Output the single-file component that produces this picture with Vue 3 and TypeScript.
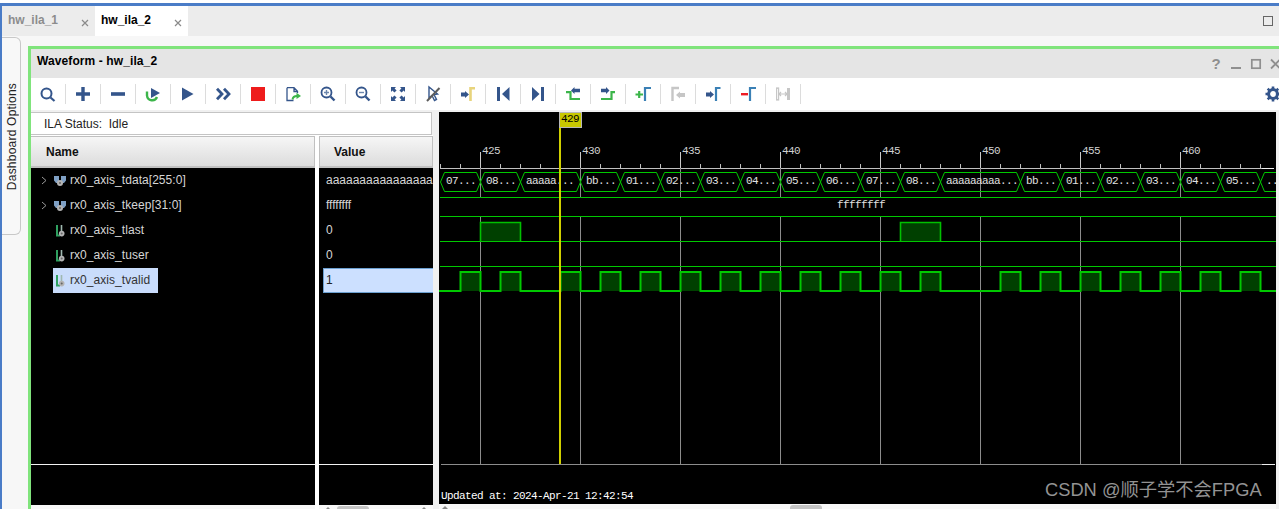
<script setup lang="ts">
interface Signal {
  name: string
  value: string
  bus?: boolean
  selected?: boolean
}

const signals: Signal[] = [
  { name: 'rx0_axis_tdata[255:0]', value: 'aaaaaaaaaaaaaaaaa', bus: true },
  { name: 'rx0_axis_tkeep[31:0]', value: 'ffffffff', bus: true },
  { name: 'rx0_axis_tlast', value: '0' },
  { name: 'rx0_axis_tuser', value: '0' },
  { name: 'rx0_axis_tvalid', value: '1', selected: true },
]

// x position of a clock tick
const tx = (t: number) => 480 + (t - 425) * 20

const majors = [425, 430, 435, 440, 445, 450, 455, 460]
const minors = Array.from({ length: 42 }, (_, i) => 440 + i * 20)

// tdata segments, in pixels on the wave canvas
const busSegs = [
  { x0: 440, x1: 480, label: '07...' },
  { x0: 480, x1: 520, label: '08...' },
  { x0: 520, x1: 580, label: 'aaaaa...' },
  { x0: 580, x1: 620, label: 'bb...' },
  { x0: 620, x1: 660, label: '01...' },
  { x0: 660, x1: 700, label: '02...' },
  { x0: 700, x1: 740, label: '03...' },
  { x0: 740, x1: 780, label: '04...' },
  { x0: 780, x1: 820, label: '05...' },
  { x0: 820, x1: 860, label: '06...' },
  { x0: 860, x1: 900, label: '07...' },
  { x0: 900, x1: 940, label: '08...' },
  { x0: 940, x1: 1020, label: 'aaaaaaaaa...' },
  { x0: 1020, x1: 1060, label: 'bb...' },
  { x0: 1060, x1: 1100, label: '01...' },
  { x0: 1100, x1: 1140, label: '02...' },
  { x0: 1140, x1: 1180, label: '03...' },
  { x0: 1180, x1: 1220, label: '04...' },
  { x0: 1220, x1: 1260, label: '05...' },
  { x0: 1260, x1: 1300, label: '..' },
]

const hexPath = (x0: number, x1: number) =>
  `M${x0 + 0.5} 182 L${x0 + 4.5} 172.5 H${x1 - 3.5} L${x1 + 0.5} 182 L${x1 - 3.5} 191.5 H${x0 + 4.5} Z`

const lastPulses = [480, 900]
const validPulses = [460, 500, 560, 600, 640, 680, 720, 760, 800, 840, 880, 920, 1000, 1040, 1080, 1120, 1160, 1200, 1240]

const validPath = validPulses.reduce((d, x) => `${d} H${x + 0.5} V272 H${x + 20.5} V291`, 'M439 291') + ' H1276'
</script>

<template>
  <div class="app">
    <div class="tabbar">
      <div class="tab">
        <span>hw_ila_1</span>
        <svg class="tab-x" width="8" height="8" viewBox="0 0 8 8"><path d="M1 1 7 7M7 1 1 7" /></svg>
      </div>
      <div class="tab active">
        <span>hw_ila_2</span>
        <svg class="tab-x" width="8" height="8" viewBox="0 0 8 8"><path d="M1 1 7 7M7 1 1 7" /></svg>
      </div>
      <div class="restore" />
    </div>

    <div class="main">
      <div class="side-wrap">
        <div class="side-tab"><span>Dashboard Options</span></div>
      </div>

      <div class="panel">
        <div class="title">
          <span class="title-text">Waveform - hw_ila_2</span>
          <div class="win-btns">
            <span class="win-q">?</span>
            <svg width="20" height="12" viewBox="0 0 20 12"><rect x="5" y="9" width="10" height="2" fill="#8f8f8f" /></svg>
            <svg width="20" height="12" viewBox="0 0 20 12"><rect x="5.8" y="1.8" width="8.4" height="8.4" fill="none" stroke="#8f8f8f" stroke-width="1.7" /></svg>
            <svg width="20" height="12" viewBox="0 0 20 12"><path d="M5 1.5 14 10.5M14 1.5 5 10.5" stroke="#8f8f8f" stroke-width="1.8" /></svg>
          </div>
        </div>

        <div class="toolbar">
          <div class="tool">
            <svg viewBox="0 0 18 18"><circle cx="7.5" cy="8.5" r="5" fill="none" stroke="#34558b" stroke-width="2" /><path d="M11.5 12.5 15.5 16" stroke="#34558b" stroke-width="2.2" /></svg>
          </div>
          <div class="tool">
            <svg viewBox="0 0 18 18"><path d="M2 9H16M9 2V16" stroke="#34558b" stroke-width="3.4" /></svg>
          </div>
          <div class="tool">
            <svg viewBox="0 0 18 18"><rect x="2" y="7.2" width="14" height="3.6" fill="#34558b" /></svg>
          </div>
          <div class="tool">
            <svg viewBox="0 0 18 18"><path d="M3 6.5V10.5A5.2 5.2 0 0 0 13 12" fill="none" stroke="#3cb54a" stroke-width="2.4" /><polygon points="7,3 16,8 7,13" fill="#34558b" /></svg>
          </div>
          <div class="tool">
            <svg viewBox="0 0 18 18"><polygon points="3,2.5 14.5,9 3,15.5" fill="#34558b" /></svg>
          </div>
          <div class="tool">
            <svg viewBox="0 0 18 18"><path d="M3 3.8 8 9 3 14.2M10 3.8 15 9 10 14.2" fill="none" stroke="#34558b" stroke-width="2.8" /></svg>
          </div>
          <div class="tool">
            <svg viewBox="0 0 18 18"><rect x="2" y="2" width="14" height="14" fill="#ee1c1c" /></svg>
          </div>
          <div class="tool">
            <svg viewBox="0 0 18 18"><path d="M3 2.7H10L13.5 6.2V8M3 2.7V15.5H9.5M10 2.7V6.5H13.5" fill="none" stroke="#34558b" stroke-width="1.3" /><path d="M8.5 14.5Q9 11 13 11" fill="none" stroke="#3cb54a" stroke-width="2" /><polygon points="12.5,7.8 17,11 12.5,14" fill="#3cb54a" /></svg>
          </div>
          <div class="tool">
            <svg viewBox="0 0 18 18"><circle cx="7.5" cy="7.5" r="5" fill="none" stroke="#34558b" stroke-width="1.8" /><path d="M5 7.5H10M7.5 5V10" stroke="#6d87ad" stroke-width="1.4" /><path d="M11.5 11.5 15.5 15.5" stroke="#34558b" stroke-width="2.4" /></svg>
          </div>
          <div class="tool">
            <svg viewBox="0 0 18 18"><circle cx="7.5" cy="7.5" r="5" fill="none" stroke="#34558b" stroke-width="1.8" /><path d="M5 7.5H10" stroke="#6d87ad" stroke-width="1.4" /><path d="M11.5 11.5 15.5 15.5" stroke="#34558b" stroke-width="2.4" /></svg>
          </div>
          <div class="tool">
            <svg viewBox="0 0 18 18"><g fill="#34558b"><polygon points="2,2 7,2 5.6,3.4 7.6,5.4 5.4,7.6 3.4,5.6 2,7" /><polygon points="16,2 11,2 12.4,3.4 10.4,5.4 12.6,7.6 14.6,5.6 16,7" /><polygon points="2,16 7,16 5.6,14.6 7.6,12.6 5.4,10.4 3.4,12.4 2,11" /><polygon points="16,16 11,16 12.4,14.6 10.4,12.6 12.6,10.4 14.6,12.4 16,11" /></g></svg>
          </div>
          <div class="tool">
            <svg viewBox="0 0 18 18"><polygon points="5,2 5,13 8,10.5 10.5,15.5 12.5,14.5 10,9.5 13.5,9" fill="none" stroke="#34558b" stroke-width="1.4" /><path d="M15.5 3 3 16" stroke="#5c5c5c" stroke-width="2" /></svg>
          </div>
          <div class="tool">
            <svg viewBox="0 0 18 18"><polygon points="2,7.5 6,7.5 6,6 10,9.5 6,13 6,11.5 2,11.5" fill="#34558b" /><path d="M11.5 16V3.2H16" fill="none" stroke="#e8d47c" stroke-width="2.6" /></svg>
          </div>
          <div class="tool">
            <svg viewBox="0 0 18 18"><rect x="3" y="2" width="3" height="14" fill="#34558b" /><polygon points="15.5,2 15.5,16 8,9" fill="#34558b" /></svg>
          </div>
          <div class="tool">
            <svg viewBox="0 0 18 18"><polygon points="3,2 3,16 10.5,9" fill="#34558b" /><rect x="12" y="2" width="3" height="14" fill="#34558b" /></svg>
          </div>
          <div class="tool">
            <svg viewBox="0 0 18 18"><path d="M2 7.2H6.5V14H16" fill="none" stroke="#3cb54a" stroke-width="2.2" /><polygon points="7,5.5 10.5,2 10.5,3.8 16,3.8 16,7.2 10.5,7.2 10.5,9" fill="#34558b" /></svg>
          </div>
          <div class="tool">
            <svg viewBox="0 0 18 18"><path d="M2 14H12.5V7.2H16" fill="none" stroke="#3cb54a" stroke-width="2.2" /><polygon points="2,3.8 7,3.8 7,2 10.5,5.5 7,9 7,7.2 2,7.2" fill="#34558b" /></svg>
          </div>
          <div class="tool">
            <svg viewBox="0 0 18 18"><path d="M1.5 9.5H9M5.2 6V13" stroke="#3cb54a" stroke-width="2.2" /><path d="M11 16V3H17" fill="none" stroke="#3a80b5" stroke-width="2.2" /></svg>
          </div>
          <div class="tool">
            <svg viewBox="0 0 18 18"><path d="M3.5 16V3H10" fill="none" stroke="#c6c6c6" stroke-width="2.4" /><polygon points="7,10 11,6.5 11,8 16,8 16,12 11,12 11,13.5" fill="#c6c6c6" /></svg>
          </div>
          <div class="tool">
            <svg viewBox="0 0 18 18"><polygon points="2,7.5 6,7.5 6,6 10,9.5 6,13 6,11.5 2,11.5" fill="#34558b" /><path d="M12 16V3H16.5" fill="none" stroke="#3a80b5" stroke-width="2.2" /></svg>
          </div>
          <div class="tool">
            <svg viewBox="0 0 18 18"><rect x="2" y="8" width="7" height="2.4" fill="#ee1c24" /><path d="M11 16V3H17" fill="none" stroke="#3a80b5" stroke-width="2.2" /></svg>
          </div>
          <div class="tool">
            <svg viewBox="0 0 18 18"><rect x="2.6" y="3" width="2" height="12" fill="none" stroke="#c6c6c6" stroke-width="1.2" /><rect x="13" y="3" width="3" height="12" fill="#c6c6c6" /><path d="M5 9H13M7 7 5 9 7 11M11 7 13 9 11 11" fill="none" stroke="#c6c6c6" stroke-width="1.2" /></svg>
          </div>
          <svg class="gear" width="16" height="16" viewBox="0 0 16 16">
            <circle cx="8" cy="8" r="4.4" fill="none" stroke="#34558b" stroke-width="3" />
            <path d="M8 0.5V3.5M8 12.5V15.5M0.5 8H3.5M12.5 8H15.5M2.7 2.7 4.8 4.8M11.2 11.2 13.3 13.3M13.3 2.7 11.2 4.8M4.8 11.2 2.7 13.3" stroke="#34558b" stroke-width="2.6" />
          </svg>
        </div>

        <div class="body">
          <div class="left">
            <div class="status">ILA Status:&nbsp; Idle</div>
            <div class="cols">
              <div class="col col-name">
                <div class="col-head">Name</div>
                <div class="col-list">
                  <div v-for="s in signals" :key="s.name" class="row">
                    <svg v-if="s.bus" class="chevron" width="6" height="9" viewBox="0 0 6 9"><path d="M1 1 5 4.5 1 8" fill="none" stroke="#9a9a9a" /></svg>
                    <span v-else class="chevron" />
                    <div class="sig" :class="{ selected: s.selected }">
                      <svg v-if="s.bus" class="sig-icon" width="12" height="12" viewBox="0 0 12 12">
                        <path d="M0 1H5V7L3.5 8H2L0 5.5ZM7 1H12V5.5L10 8H8.5L7 7Z" fill="#7fa0c4" />
                        <circle cx="6" cy="8" r="3" fill="#b4b4b4" />
                        <circle cx="6" cy="8" r="1" fill="#666" />
                      </svg>
                      <svg v-else class="sig-icon" width="12" height="12" viewBox="0 0 12 12">
                        <path d="M3 0V10.6H6" fill="none" stroke="#2fa060" stroke-width="2" />
                        <path d="M7.5 0V6" stroke="#9fb8b0" stroke-width="1.6" />
                        <circle cx="7.7" cy="8.6" r="2.8" fill="#b4b4b4" />
                        <circle cx="7.7" cy="8.6" r="1" fill="#666" />
                      </svg>
                      <span>{{ s.name }}</span>
                    </div>
                  </div>
                </div>
                <div class="col-foot" />
                <div class="hscroll" />
              </div>

              <div class="col col-value">
                <div class="col-head">Value</div>
                <div class="col-list">
                  <div v-for="s in signals" :key="s.name" class="val" :class="{ selected: s.selected }"><span>{{ s.value }}</span></div>
                </div>
                <div class="col-foot" />
                <div class="hscroll">
                  <i class="arrow arrow-l" />
                  <i class="thumb thumb-val" />
                  <i class="arrow arrow-r" />
                </div>
              </div>
            </div>
          </div>

          <div class="wave-pane">
            <svg class="wave" width="837" height="392" viewBox="439 112 837 392">
              <!-- ruler -->
              <path d="M440 168.5H1262" stroke="#c0c0c0" />
              <path d="M1262 168.5H1274" stroke="#f0f0f0" />
              <path v-for="x in minors" :key="x" :d="`M${x + 0.5} 164V168`" stroke="#c0c0c0" />
              <g v-for="t in majors" :key="t">
                <path :d="`M${tx(t) + 0.5} 152V464`" stroke="#8c8c8c" />
                <path :d="`M${tx(t) + 0.5} 152V168`" stroke="#c8c8c8" />
                <text :x="tx(t) + 2" y="154" class="mono ruler-text">{{ t }}</text>
              </g>
              <path d="M441 464.5H1262" stroke="#8c8c8c" />
              <path d="M1262 464.5H1275" stroke="#eeeeee" />

              <!-- tdata -->
              <g v-for="(b, i) in busSegs" :key="i">
                <path :d="hexPath(b.x0, b.x1)" fill="none" stroke="#00c800" />
                <text :x="b.x0 + 6" y="184" class="mono bus-text">{{ b.label }}</text>
              </g>

              <!-- tkeep, the bus is filled so grid lines stop behind it -->
              <rect x="440" y="197" width="836" height="20" fill="#000" />
              <path d="M440 197.5H1276M440 216.5H1276" stroke="#00c800" />
              <text x="837" y="208" class="mono bus-text">ffffffff</text>

              <!-- tlast -->
              <path d="M440 241.5H1276" stroke="#00c800" />
              <g v-for="x in lastPulses" :key="x">
                <rect :x="x + 1" y="223" width="39" height="18" fill="#004000" />
                <path :d="`M${x + 0.5} 241V222.5H${x + 40.5}V241`" fill="none" stroke="#00c000" stroke-width="1.6" />
              </g>

              <!-- tuser -->
              <path d="M440 266.5H1276" stroke="#00c800" />

              <!-- tvalid -->
              <g v-for="x in validPulses" :key="x">
                <rect :x="x + 1" y="272" width="19" height="19" fill="#004000" />
              </g>
              <path :d="validPath" fill="none" stroke="#00c800" stroke-width="2" />

              <!-- cursor -->
              <rect x="559" y="128" width="2" height="336" fill="#d0d000" />
              <rect x="559.5" y="112.5" width="22" height="15" fill="#c8c800" stroke="#b8b8b8" />
              <text x="561" y="122" class="mono cursor-text">429</text>

              <text x="441" y="499" class="mono updated">Updated at: 2024-Apr-21 12:42:54</text>
            </svg>
            <div class="hscroll">
              <i class="arrow arrow-w" />
              <i class="thumb thumb-wave" />
            </div>
            <div class="watermark">CSDN @顺子学不会FPGA</div>
          </div>
        </div>
      </div>
    </div>
  </div>
</template>

<style>
html,
body {
  margin: 0;
  background: #fff;
  overflow: hidden;
}
</style>

<style scoped>
.app {
  width: 1279px;
  height: 509px;
  box-sizing: border-box;
  padding-top: 3px;
  display: flex;
  flex-direction: column;
  overflow: hidden;
  font-family: "Liberation Sans", Arial, sans-serif;
  font-size: 12px;
  color: #000;
}

.tabbar {
  height: 30px;
  flex: none;
  display: flex;
  padding-left: 2px;
  border-top: 3px solid #4a7cc7;
  background: #ececec;
  box-shadow: inset 2px 0 0 #4a7cc7;
}

.tab {
  width: 93px;
  box-sizing: border-box;
  display: flex;
  align-items: center;
  padding: 0 0 3px 6px;
  font-weight: 700;
  color: #8c8c8c;
  position: relative;
}

.tab.active {
  background: #fff;
  color: #000;
}

.tab-x {
  position: absolute;
  right: 6px;
  top: 13px;
}

.tab-x path {
  stroke: #8a8a8a;
  stroke-width: 1.2;
}

.restore {
  width: 8px;
  height: 8px;
  margin: 10px 6px 0 auto;
  border: 1px solid #666;
}

.main {
  flex: 1;
  min-height: 0;
  display: flex;
  background: #f7f7f7;
  border-left: 2px solid #4a7cc7;
}

.side-wrap {
  width: 26px;
  flex: none;
  padding-top: 1px;
}

.side-tab {
  width: 19px;
  height: 198px;
  box-sizing: border-box;
  display: flex;
  align-items: center;
  justify-content: center;
  padding-left: 1px;
  padding-top: 2px;
  border: 1px solid #c8c8c8;
  border-left: 0;
  border-radius: 0 6px 6px 0;
  background: #f8f8f8;
}

.side-tab span {
  writing-mode: vertical-rl;
  transform: rotate(180deg);
  white-space: nowrap;
  letter-spacing: 0.22px;
  color: #222;
}

.panel {
  flex: 1;
  min-width: 0;
  margin-top: 10px;
  display: flex;
  flex-direction: column;
  border-top: 3px solid #80e47c;
  border-left: 3px solid #80e47c;
}

.title {
  height: 29px;
  flex: none;
  display: flex;
  align-items: center;
  justify-content: space-between;
  padding-left: 6px;
  background: #e5e5e5;
}

.title-text {
  font-weight: 700;
  letter-spacing: 0.1px;
  padding-bottom: 5px;
}

.win-btns {
  display: flex;
  align-items: center;
  margin: 0 -7px 0 0;
  padding-top: 1px;
}

.win-q {
  width: 20px;
  text-align: center;
  font-size: 15px;
  font-weight: 700;
  color: #8f8f8f;
  line-height: 12px;
}

.toolbar {
  height: 32px;
  flex: none;
  display: flex;
  align-items: center;
  background: #fff;
}

.tool {
  width: 35px;
  height: 20px;
  box-sizing: border-box;
  flex: none;
  display: flex;
  align-items: center;
  justify-content: center;
  padding-right: 1px;
  border-right: 1px solid #dcdcdc;
}

.tool svg {
  width: 18px;
  height: 18px;
  flex: none;
}

.gear {
  margin: 0 -2px 0 auto;
}

.body {
  flex: 1;
  min-height: 0;
  display: flex;
  padding-top: 2px;
  background: #f0f0f0;
}

.left {
  width: 402px;
  flex: none;
  display: flex;
  flex-direction: column;
}

.status {
  height: 23px;
  box-sizing: border-box;
  flex: none;
  margin-right: 1px;
  padding: 4px 0 0 13px;
  background: #fff;
  border: 1px solid #c4c4c4;
  border-left: 0;
  color: #222;
}

.cols {
  flex: 1;
  min-height: 0;
  display: flex;
  gap: 4px;
  padding-top: 1px;
  background: #fff;
}

.col {
  display: flex;
  flex-direction: column;
}

.col-name {
  width: 284px;
}

.col-value {
  width: 114px;
  overflow: hidden;
}

.col-head {
  height: 32px;
  box-sizing: border-box;
  flex: none;
  display: flex;
  align-items: center;
  font-weight: 700;
  color: #111;
  background: linear-gradient(#f6f6f6, #dcdcdc);
  border: 1px solid #c0c0c0;
  border-bottom-width: 2px;
}

.col-name .col-head {
  padding-left: 15px;
  border-left: 0;
}

.col-value .col-head {
  padding-left: 14px;
}

.col-list {
  height: 296px;
  flex: none;
  background: #000;
  overflow: hidden;
}

.col-foot {
  height: 40px;
  flex: none;
  background: #000;
  border-top: 1px solid #f2f2f2;
}

.row {
  height: 25px;
  display: flex;
  align-items: center;
  padding-left: 10px;
}

.chevron {
  width: 6px;
  margin-right: 6px;
  flex: none;
}

.sig {
  height: 25px;
  display: flex;
  align-items: center;
  gap: 4px;
  padding: 0 8px 0 1px;
  color: #d6d6d6;
  white-space: nowrap;
}

.sig span {
  letter-spacing: 0.05px;
  padding-bottom: 2px;
}

.sig.selected {
  background: #c9dcfb;
  color: #333;
}

.val {
  height: 25px;
  box-sizing: border-box;
  display: flex;
  align-items: center;
  padding-left: 7px;
  color: #d6d6d6;
  white-space: nowrap;
  overflow: hidden;
}

.val span {
  padding-bottom: 2px;
}

.val.selected {
  margin-left: 4px;
  padding-left: 2px;
  background: #cce0ff;
  border: 1px solid #6ca0d0;
  border-right: 0;
  color: #222;
}

.hscroll {
  height: 5px;
  flex: none;
  position: relative;
  display: flex;
  align-items: flex-start;
  background: #f8f8f8;
}

.arrow {
  display: block;
  width: 0;
  height: 0;
  margin-top: 2px;
  border: 3px solid transparent;
  border-top: 0;
  border-bottom: 3px solid #888;
}

.arrow-l {
  margin-left: 6px;
}

.arrow-r {
  margin-left: 52px;
}

.arrow-w {
  margin-left: 3px;
}

.thumb {
  display: block;
  height: 5px;
  margin-top: 1px;
  border-radius: 3px 3px 0 0;
  background: #c4c4c4;
}

.thumb-val {
  width: 32px;
  margin-left: 6px;
}

.thumb-wave {
  width: 32px;
  margin-left: 342px;
}

.wave-pane {
  width: 837px;
  flex: none;
  margin-left: 6px;
  position: relative;
  display: flex;
  flex-direction: column;
  background: #fff;
}

.wave {
  display: block;
  background: #000;
  flex: none;
}

.mono {
  font-family: "Liberation Mono", "DejaVu Sans Mono", monospace;
  font-size: 11px;
  letter-spacing: -0.6px;
}

.ruler-text {
  fill: #d0d0d0;
}

.bus-text {
  fill: #e0e0e0;
}

.cursor-text {
  fill: #000;
}

.updated {
  fill: #fff;
}

.watermark {
  position: absolute;
  left: 606px;
  top: 367px;
  font-family: "Liberation Sans", "Noto Sans CJK SC", sans-serif;
  font-size: 18.3px;
  line-height: 22px;
  color: #939393;
  white-space: nowrap;
}
</style>
